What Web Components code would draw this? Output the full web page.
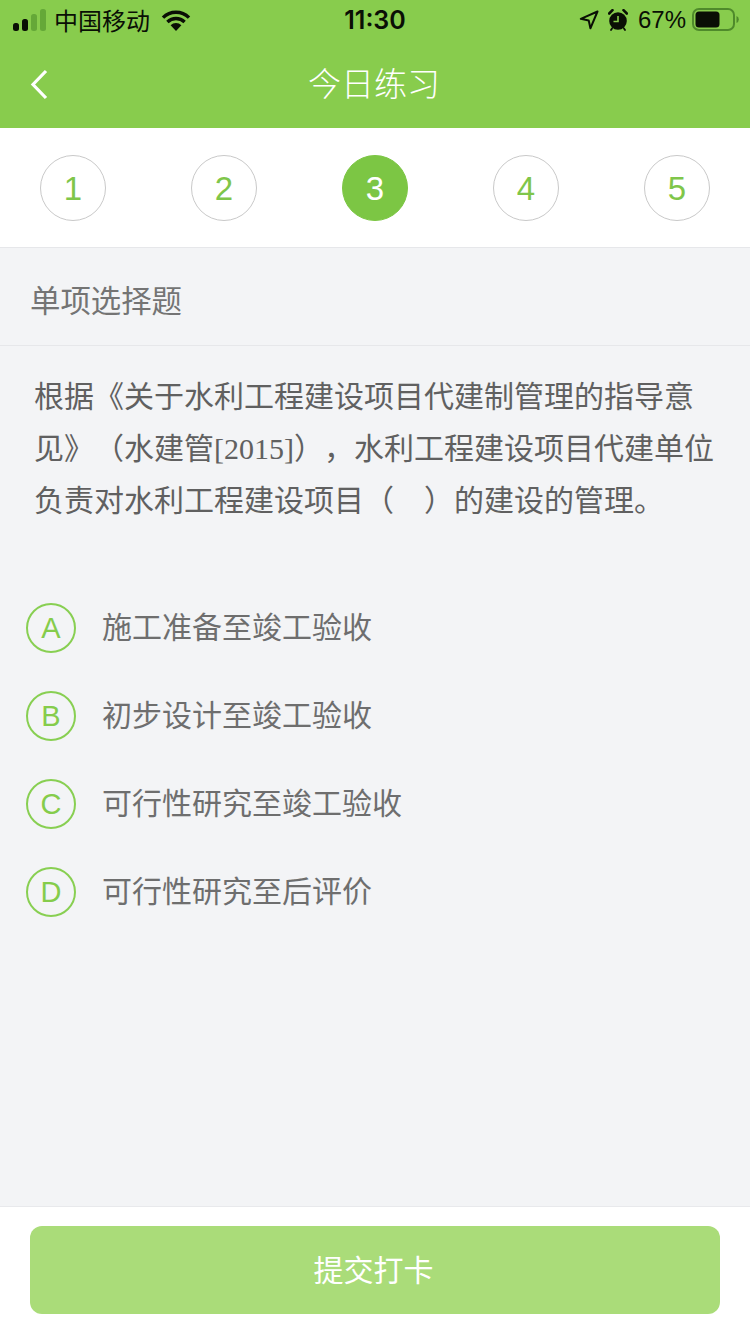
<!DOCTYPE html>
<html lang="zh-CN">
<head>
<meta charset="utf-8">
<title>今日练习</title>
<style>
html,body{margin:0;padding:0;background:#f3f4f6;}
body{width:750px;height:1334px;font-family:"Liberation Sans","Noto Sans CJK SC",sans-serif;text-spacing-trim:space-all;text-autospace:no-autospace;}
</style>
</head>
<body>
<quiz-app></quiz-app>
<template id="t-app">
<style>
:host{display:flex;flex-direction:column;width:750px;height:1334px;overflow:hidden;background:#f3f4f6;}
.main{flex:1;display:flex;flex-direction:column;}
</style>
<app-header></app-header>
<step-row></step-row>
<div class="main">
<section-title>单项选择题</section-title>
<quiz-question>
<div>根据《关于水利工程建设项目代建制管理的指导意</div>
<div>见》（水建管<span style="font-family:'Liberation Serif',serif;line-height:1">[2015]</span>），水利工程建设项目代建单位</div>
<div>负责对水利工程建设项目（　）的建设的管理。</div>
</quiz-question>
<quiz-options>
<quiz-option letter="A">施工准备至竣工验收</quiz-option>
<quiz-option letter="B">初步设计至竣工验收</quiz-option>
<quiz-option letter="C">可行性研究至竣工验收</quiz-option>
<quiz-option letter="D">可行性研究至后评价</quiz-option>
</quiz-options>
</div>
<submit-bar>提交打卡</submit-bar>
</template>
<template id="t-header">
<style>
:host{display:block;background:#88cc4d;height:128px;}
.status{height:40px;display:grid;grid-template-columns:1fr auto 1fr;align-items:center;color:#0a0f05;}
.left,.right{display:flex;align-items:center;}
.left{padding-left:13px;gap:7px;}
.right{justify-content:flex-end;padding-right:11px;}
.carrier{font:400 24px/40px "Noto Sans CJK SC",sans-serif;}
.time{font:600 25px/40px Inter,"Liberation Sans",sans-serif;}
.pct{font:400 24px/40px "Liberation Sans",sans-serif;margin:0 6px 0 10px;}
svg{display:block;}
.nav{height:88px;display:grid;grid-template-columns:1fr auto 1fr;align-items:center;}
.title{font:300 33px/84px "Noto Sans CJK SC",sans-serif;color:#fff;height:84px;margin:0 2px 4px 0;}
.back{padding-left:30px;height:31px;}
</style>
<div class="status">
<div class="left">
<svg width="34" height="22" viewBox="0 0 34 22"><rect x="0" y="14" width="6" height="8" rx="2.500" fill="#0a0f05"/><rect x="9" y="10" width="6" height="12" rx="2.500" fill="#0a0f05"/><rect x="18" y="5" width="6" height="17" rx="2.500" fill="#65a838"/><rect x="27" y="0" width="6" height="22" rx="2.500" fill="#65a838"/></svg>
<span class="carrier">中国移动</span>
<svg width="30" height="22" viewBox="0 0 30 22" style="margin-left:4px"><path d="M15 22 9.600 16.200a7.600 7.600 0 0 1 10.800 0Z" fill="#0a0f05"/><path d="M2 8.600a18.600 18.600 0 0 1 26 0M6.400 13a12.400 12.400 0 0 1 17.200 0" fill="none" stroke="#0a0f05" stroke-width="3.400"/></svg>
</div>
<div class="time">11:30</div>
<div class="right">
<svg width="20" height="20" viewBox="0 0 20 20" style="margin-right:9px"><path d="M18.500 1.500 1.800 8.800l7.900 1.600 1.700 7.900Z" fill="none" stroke="#0a0f05" stroke-width="2" stroke-linejoin="round"/></svg>
<svg width="20" height="22" viewBox="0 0 20 22"><circle cx="10" cy="12" r="8.800" fill="#0a0f05"/><path d="M10 7v5.500H5.500" fill="none" stroke="#88cc4d" stroke-width="1.600"/><path d="M1.200 4.500 4.500 1.200M18.800 4.500 15.500 1.200" stroke="#0a0f05" stroke-width="2.600" stroke-linecap="round"/><path d="M4 19.500 3 21M16 19.500 17 21" stroke="#0a0f05" stroke-width="1.800" stroke-linecap="round"/></svg>
<span class="pct">67%</span>
<svg width="47" height="24" viewBox="0 0 47 24"><rect x="1" y="1" width="41" height="21" rx="6" fill="none" stroke="#4f8a2b" stroke-width="2"/><rect x="3.500" y="3.500" width="24" height="16" rx="3.500" fill="#0a0f05"/><path d="M44.500 8v7a3.800 3.800 0 0 0 0-7Z" fill="#4f8a2b"/></svg>
</div>
</div>
<div class="nav">
<div class="back"><svg width="18" height="31" viewBox="0 0 18 31"><path d="M16 2 3 15.500 16 29" fill="none" stroke="#fff" stroke-width="3.200"/></svg></div>
<div class="title">今日练习</div>
<div></div>
</div>
</template>
<template id="t-steps">
<style>
:host{display:flex;justify-content:space-between;box-sizing:border-box;height:120px;padding:27px 40px 0;background:#fff;border-bottom:1px solid #e6e7ea;}
</style>
<step-dot>1</step-dot><step-dot>2</step-dot><step-dot active>3</step-dot><step-dot>4</step-dot><step-dot>5</step-dot>
</template>
<template id="t-dot">
<style>
:host{display:flex;align-items:center;justify-content:center;box-sizing:border-box;width:66px;height:66px;border-radius:50%;border:1px solid #c9c9c9;color:#7fc64a;font:400 33px/1 "Liberation Sans",sans-serif;}
:host([active]){background:#7cc644;border-color:#7cc644;color:#fff;}
</style>
<slot></slot>
</template>
<template id="t-section">
<style>
:host{display:flex;align-items:center;box-sizing:border-box;height:98px;padding:6px 30px 0;border-bottom:1px solid #e6e7ea;color:#747474;font:400 30.400px/1 "Noto Sans CJK SC",sans-serif;}
</style>
<slot></slot>
</template>
<template id="t-question">
<style>
:host{display:block;padding:22px 30px 0 34px;color:#606060;font:400 30px/52px "Noto Sans CJK SC",sans-serif;}
</style>
<slot></slot>
</template>
<template id="t-options">
<style>
:host{display:flex;flex-direction:column;padding:79px 0 0 26px;gap:38px;}
</style>
<slot></slot>
</template>
<template id="t-option">
<style>
:host{display:flex;align-items:center;height:50px;gap:26px;color:#6e6e6e;font:400 30px/50px "Noto Sans CJK SC",sans-serif;}
.c{box-sizing:border-box;width:50px;height:50px;border-radius:50%;border:2px solid #88cf52;color:#85cc4b;display:flex;align-items:center;justify-content:center;font:400 29px/1 "Liberation Sans",sans-serif;}
.t{padding-bottom:6px;}
</style>
<span class="c" id="l"></span><span class="t"><slot></slot></span>
</template>
<template id="t-submit">
<style>
:host{display:block;box-sizing:border-box;height:128px;padding:19px 30px 0;background:#fff;border-top:1px solid #e8e9ec;}
.b{box-sizing:border-box;height:88px;border-radius:12px;background:#aadc79;color:#fff;display:flex;align-items:center;justify-content:center;padding:0 3px 4px 0;font:400 30px/1 "Noto Sans CJK SC",sans-serif;}
</style>
<div class="b"><slot></slot></div>
</template>
<script>
function def(name,tid,setup){
  customElements.define(name,class extends HTMLElement{
    constructor(){super();const r=this.attachShadow({mode:"open"});r.appendChild(document.getElementById(tid).content.cloneNode(true));}
    connectedCallback(){if(setup)setup(this);}
  });
}
def("app-header","t-header");
def("step-row","t-steps");
def("step-dot","t-dot");
def("section-title","t-section");
def("quiz-question","t-question");
def("quiz-options","t-options");
def("quiz-option","t-option",e=>{e.shadowRoot.getElementById("l").textContent=e.getAttribute("letter");});
def("submit-bar","t-submit");
def("quiz-app","t-app");
</script>
</body>
</html>
